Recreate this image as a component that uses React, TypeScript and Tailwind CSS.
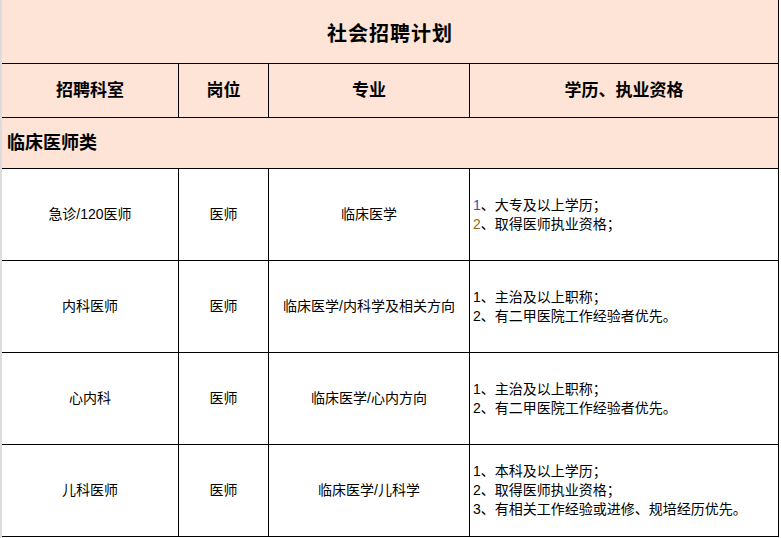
import React from 'react';

const font = { fontFamily: '"Liberation Sans", "Noto Sans CJK SC", sans-serif' };

interface Row {
  dept: string;
  post: string;
  major: string;
  reqs: React.ReactNode[];
}

const rows: Row[] = [
  {
    dept: '急诊/120医师',
    post: '医师',
    major: '临床医学',
    reqs: [
      <><span className="text-[#1d5bb8]">1</span>、大专及以上学历；</>,
      <><span className="text-[#9a6a1c]">2</span>、取得医师执业资格；</>,
    ],
  },
  {
    dept: '内科医师',
    post: '医师',
    major: '临床医学/内科学及相关方向',
    reqs: ['1、主治及以上职称；', '2、有二甲医院工作经验者优先。'],
  },
  {
    dept: '心内科',
    post: '医师',
    major: '临床医学/心内方向',
    reqs: ['1、主治及以上职称；', '2、有二甲医院工作经验者优先。'],
  },
  {
    dept: '儿科医师',
    post: '医师',
    major: '临床医学/儿科学',
    reqs: ['1、本科及以上学历；', '2、取得医师执业资格；', '3、有相关工作经验或进修、规培经历优先。'],
  },
];

export default function App() {
  return (
    <div className="flex w-[781px] h-[538px] overflow-hidden bg-white text-black" style={font}>
      <div className="w-[2px] shrink-0 bg-[#dcdcdc]" />
      <div className="w-[777px] shrink-0">
        {/* 标题 */}
        <div className="h-[64px] flex items-center justify-center bg-[#fde4d6] border-b border-r border-black">
          <span className="text-[20px] font-bold tracking-[1px] pt-[4px]">社会招聘计划</span>
        </div>

        {/* 表头 */}
        <div className="grid grid-cols-[177px_90px_201px_309px] h-[54px] bg-[#fde4d6] border-b border-black text-[17px] font-bold">
          <div className="flex items-center justify-center border-r border-black">招聘科室</div>
          <div className="flex items-center justify-center border-r border-black">岗位</div>
          <div className="flex items-center justify-center border-r border-black">专业</div>
          <div className="flex items-center justify-center border-r border-black">学历、执业资格</div>
        </div>

        {/* 分类 */}
        <div className="h-[51px] flex items-center px-[5px] bg-[#fde4d6] border-b border-r border-black text-[18px] font-bold">
          临床医师类
        </div>

        {rows.map((r, i) => (
          <div key={i} className="grid grid-cols-[177px_90px_201px_309px] h-[92px] border-b border-black text-[14px]">
            <div className="flex items-center justify-center border-r border-black">{r.dept}</div>
            <div className="flex items-center justify-center border-r border-black">{r.post}</div>
            <div className="flex items-center justify-center border-r border-black">{r.major}</div>
            <div className="flex flex-col justify-center pl-[3px] leading-[19px] border-r border-black">
              {r.reqs.map((t, j) => (
                <div key={j}>{t}</div>
              ))}
            </div>
          </div>
        ))}
      </div>
    </div>
  );
}
